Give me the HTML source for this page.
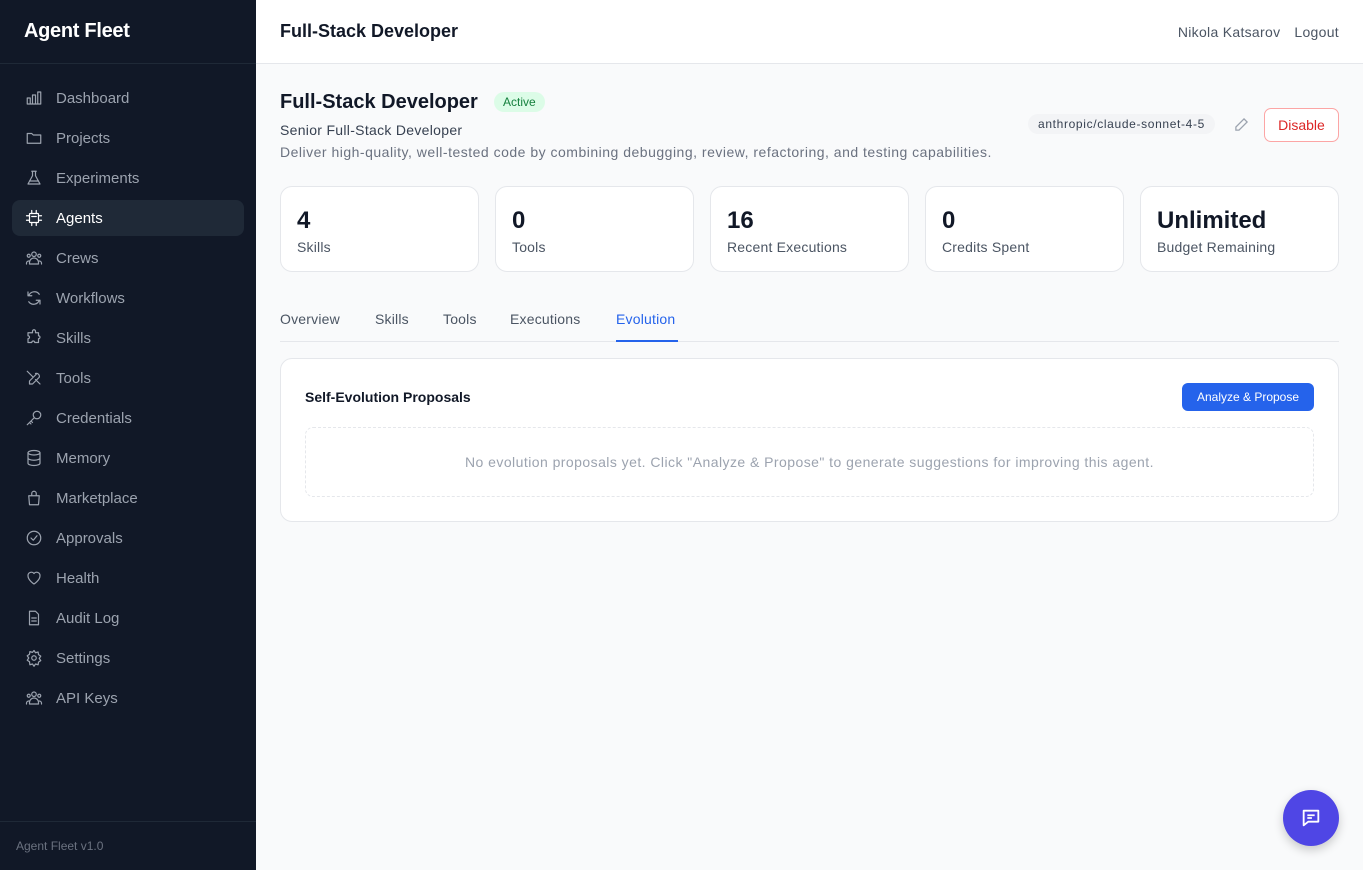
<!DOCTYPE html>
<html><head><meta charset="utf-8"><style>
*{box-sizing:border-box;margin:0;padding:0}
body{width:1363px;height:870px;font-family:"Liberation Sans",sans-serif;background:#f9fafb;position:relative;overflow:hidden;color:#111827}
.sb{position:absolute;left:0;top:0;width:256px;height:870px;background:#111827}
.logo{height:64px;border-bottom:1px solid #1f2937;padding:20px 24px;color:#fff;font-weight:bold;font-size:20px;letter-spacing:-0.3px}
.nav{position:absolute;left:12px;width:232px;height:36px;display:flex;align-items:center;padding-left:13px;color:#9ca3af;font-size:15px;border-radius:8px}
.nav svg{width:18px;height:18px;margin-right:13px;fill:none;stroke:#9ca3af;stroke-width:1.6;stroke-linecap:round;stroke-linejoin:round}
.nav.a{background:#1f2937;color:#fff}.nav.a svg{stroke:#fff}
.ver{position:absolute;bottom:0;left:0;width:256px;height:49px;border-top:1px solid #1f2937;color:#6b7280;font-size:12px;padding:17px 16px}
.hd{position:absolute;left:256px;top:0;right:0;height:64px;background:#fff;border-bottom:1px solid #e5e7eb}
.hd h1{position:absolute;left:24px;top:21px;font-size:18px;font-weight:bold}
.hd .u{position:absolute;right:24px;top:24px;font-size:14px;color:#4b5563;letter-spacing:0.3px}
.abs{position:absolute}
.card{position:absolute;top:186px;width:199px;height:86px;background:#fff;border:1px solid #e5e7eb;border-radius:12px;padding:20px 16px}
.card b{display:block;font-size:24px;line-height:28px;margin-bottom:4px}
.card span{font-size:14px;color:#4b5563;letter-spacing:0.2px}
.tab{position:absolute;top:311px;font-size:14px;color:#4b5563;letter-spacing:0.2px}
</style></head><body>
<div class="sb">
<div class="logo">Agent Fleet</div>
<div class="nav" style="top:80px"><svg viewBox="0 0 24 24"><path d="M3 20V12h4v8M10 20V8h4v12M17 20V4h4v16M3 20h18"/></svg>Dashboard</div>
<div class="nav" style="top:120px"><svg viewBox="0 0 24 24"><path d="M3 6h6l2 2h10v11H3z"/></svg>Projects</div>
<div class="nav" style="top:160px"><svg viewBox="0 0 24 24"><path d="M9 3h6M10 3v6L4 20h16L14 9V3M6 16h12"/></svg>Experiments</div>
<div class="nav a" style="top:200px"><svg viewBox="0 0 24 24"><rect x="6" y="6" width="12" height="12" rx="1"/><path d="M9 2v4M15 2v4M9 18v4M15 18v4M2 9h4M2 15h4M18 9h4M18 15h4M9 10h6"/></svg>Agents</div>
<div class="nav" style="top:240px"><svg viewBox="0 0 24 24"><circle cx="12" cy="7" r="3"/><circle cx="5" cy="9" r="2"/><circle cx="19" cy="9" r="2"/><path d="M6 20v-2a6 6 0 0112 0v2zM2 20v-1a3 3 0 013-3M22 20v-1a3 3 0 00-3-3"/></svg>Crews</div>
<div class="nav" style="top:280px"><svg viewBox="0 0 24 24"><path d="M4 4v5h5M20 20v-5h-5M5 9a8 8 0 0114-2M19 15a8 8 0 01-14 2"/></svg>Workflows</div>
<div class="nav" style="top:320px"><svg viewBox="0 0 24 24"><path d="M10 3a2 2 0 014 0v2h4v4a2 2 0 010 4v5h-5a2 2 0 00-4 0H4v-5a2 2 0 000-4V5h6z"/></svg>Skills</div>
<div class="nav" style="top:360px"><svg viewBox="0 0 24 24"><path d="M14 6a4 4 0 015 5l-9 9-4 0 0-4 9-9M3 3l7 7M14 14l6 6"/></svg>Tools</div>
<div class="nav" style="top:400px"><svg viewBox="0 0 24 24"><circle cx="16" cy="8" r="5"/><path d="M12 12l-9 9M6 18l2 2M8 16l2 2"/></svg>Credentials</div>
<div class="nav" style="top:440px"><svg viewBox="0 0 24 24"><ellipse cx="12" cy="5" rx="8" ry="3"/><path d="M4 5v14c0 1.7 3.6 3 8 3s8-1.3 8-3V5M4 12c0 1.7 3.6 3 8 3s8-1.3 8-3"/></svg>Memory</div>
<div class="nav" style="top:480px"><svg viewBox="0 0 24 24"><path d="M5 9h14l-1 12H6zM9 9V6a3 3 0 016 0v3"/></svg>Marketplace</div>
<div class="nav" style="top:520px"><svg viewBox="0 0 24 24"><circle cx="12" cy="12" r="9"/><path d="M8 12l3 3 5-6"/></svg>Approvals</div>
<div class="nav" style="top:560px"><svg viewBox="0 0 24 24"><path d="M12 20s-8-5-8-11a4.5 4.5 0 018-3 4.5 4.5 0 018 3c0 6-8 11-8 11z"/></svg>Health</div>
<div class="nav" style="top:600px"><svg viewBox="0 0 24 24"><path d="M6 3h8l4 4v14H6zM9 12h6M9 16h6"/></svg>Audit Log</div>
<div class="nav" style="top:640px"><svg viewBox="0 0 24 24"><circle cx="12" cy="12" r="3"/><path d="M12 2l2 3 3.5-1 .5 3.5 3 2-2 3 2 3-3 2-.5 3.5-3.5-1-2 3-2-3-3.5 1L6 17l-3-2 2-3-2-3 3-2 .5-3.5 3.5 1z"/></svg>Settings</div>
<div class="nav" style="top:680px"><svg viewBox="0 0 24 24"><circle cx="12" cy="7" r="3"/><circle cx="5" cy="9" r="2"/><circle cx="19" cy="9" r="2"/><path d="M6 20v-2a6 6 0 0112 0v2zM2 20v-1a3 3 0 013-3M22 20v-1a3 3 0 00-3-3"/></svg>API Keys</div>
<div class="ver">Agent Fleet v1.0</div>
</div>
<div class="hd"><h1>Full-Stack Developer</h1><div class="u">Nikola Katsarov<span style="margin-left:14px">Logout</span></div></div>

<div class="abs" style="left:280px;top:91px;font-size:20px;font-weight:bold">Full-Stack Developer</div>
<div class="abs" style="left:494px;top:92px;background:#dcfce7;color:#15803d;font-size:12px;padding:3px 9px;border-radius:10px">Active</div>
<div class="abs" style="left:280px;top:122px;font-size:14px;color:#374151;letter-spacing:0.3px">Senior Full-Stack Developer</div>
<div class="abs" style="left:280px;top:144px;font-size:14px;color:#6b7280;letter-spacing:0.5px">Deliver high-quality, well-tested code by combining debugging, review, refactoring, and testing capabilities.</div>
<div class="abs" style="left:1028px;top:114px;background:#f3f4f6;color:#374151;font-size:12px;padding:3px 10px;border-radius:10px;letter-spacing:0.65px">anthropic/claude-sonnet-4-5</div>
<svg class="abs" style="left:1234px;top:117px" width="15" height="15" viewBox="0 0 24 24" fill="none" stroke="#9ca3af" stroke-width="2"><path d="M16 3l5 5L8 21H3v-5z"/></svg>
<div class="abs" style="left:1264px;top:108px;width:75px;height:34px;border:1px solid #fca5a5;border-radius:7px;background:#fff;color:#dc2626;font-size:14px;text-align:center;line-height:32px">Disable</div>

<div class="card" style="left:280px"><b>4</b><span>Skills</span></div>
<div class="card" style="left:495px"><b>0</b><span>Tools</span></div>
<div class="card" style="left:710px"><b>16</b><span>Recent Executions</span></div>
<div class="card" style="left:925px"><b>0</b><span>Credits Spent</span></div>
<div class="card" style="left:1140px"><b>Unlimited</b><span>Budget Remaining</span></div>

<div class="tab" style="left:280px">Overview</div>
<div class="tab" style="left:375px">Skills</div>
<div class="tab" style="left:443px">Tools</div>
<div class="tab" style="left:510px">Executions</div>
<div class="tab" style="left:616px;color:#2563eb">Evolution</div>
<div class="abs" style="left:280px;top:341px;width:1059px;height:1px;background:#e5e7eb"></div>
<div class="abs" style="left:616px;top:340px;width:62px;height:2px;background:#2563eb"></div>

<div class="abs" style="left:280px;top:358px;width:1059px;height:164px;background:#fff;border:1px solid #e5e7eb;border-radius:12px">
<div class="abs" style="left:24px;top:30px;font-size:14px;font-weight:bold">Self-Evolution Proposals</div>
<div class="abs" style="left:901px;top:24px;width:132px;height:28px;background:#2563eb;color:#fff;border-radius:6px;font-size:12px;text-align:center;line-height:28px">Analyze &amp; Propose</div>
<div class="abs" style="left:24px;top:68px;width:1009px;height:70px;border:1px dashed #e5e7eb;border-radius:8px;text-align:center;line-height:68px;font-size:14px;color:#9ca3af;letter-spacing:0.45px">No evolution proposals yet. Click "Analyze &amp; Propose" to generate suggestions for improving this agent.</div>
</div>

<div class="abs" style="left:1283px;top:790px;width:56px;height:56px;border-radius:50%;background:#4f46e5;box-shadow:0 4px 10px rgba(0,0,0,.2)">
<svg style="position:absolute;left:17px;top:17px" width="22" height="22" viewBox="0 0 24 24" fill="none" stroke="#fff" stroke-width="2" stroke-linejoin="round"><path d="M4 4h16v12H9l-5 4z"/><path d="M8 9h8M8 12h5"/></svg></div>
</body></html>
